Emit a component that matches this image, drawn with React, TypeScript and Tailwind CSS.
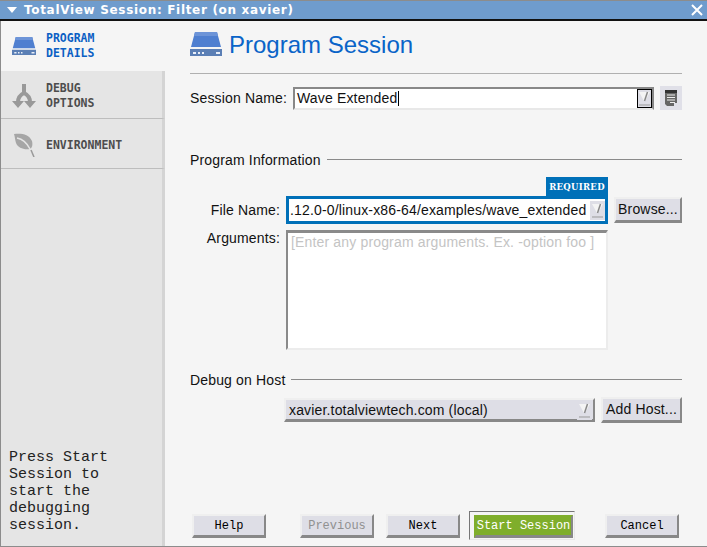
import { ReactNode } from "react";

const sans = "font-['Liberation_Sans',Arial,sans-serif]";
const mono = "font-['DejaVu_Sans_Mono','Liberation_Mono',monospace]";
const thinMono = "font-['Liberation_Mono',monospace]";

// Drive glyph used in the nav and next to the heading
const DriveIcon = ({ className }: { className: string }) => (
  <svg viewBox="0 0 32 24" className={className}>
    <path d="M5 0h22l4 15H1z" fill="#4f7fd0" />
    <path d="M5 0h22l1 4H4z" fill="#6d94d8" />
    <rect x="0" y="17" width="32" height="7" fill="#5b7fb5" />
    <rect x="3" y="20" width="3" height="2" fill="#e8eef8" />
    <rect x="8" y="20" width="2" height="2" fill="#e8eef8" />
    <rect x="12" y="20" width="2" height="2" fill="#e8eef8" />
    <rect x="26" y="20" width="4" height="2" fill="#e8eef8" />
  </svg>
);

const ForkIcon = () => (
  <svg viewBox="0 0 24 24" className="h-[24px] w-[24px]">
    <path d="M12 0v9M12 9C8 11 6 13 6 18M12 9c4 2 6 4 6 9" fill="none" stroke="#999" strokeWidth="4" />
    <path d="M0 17h12l-6 7zM12 17h12l-6 7z" fill="#999" />
  </svg>
);

const LeafIcon = () => (
  <svg viewBox="0 0 22 24" className="h-[24px] w-[22px]">
    <path d="M1 1c7-1 15 0 18 7 1 4 0 7-2 8-6 1-12-1-14-6C2 7 2 4 1 1z" fill="#a6a6a6" />
    <path d="M4 5c5 1 10 5 13 11l3 8" fill="none" stroke="#e5e5e5" strokeWidth="1.5" />
    <path d="M18 17l3 7" fill="none" stroke="#999" strokeWidth="1.5" />
  </svg>
);

const ComboArrow = ({ boxed }: { boxed?: boolean }) => (
  <span className={`flex h-[19px] w-[15px] shrink-0 items-center justify-center bg-[#dedee6] ${boxed ? "border border-black" : ""}`}>
    <svg viewBox="0 0 13 17" className="h-[17px] w-[13px]">
      <path d="M1 2h11l-5 9H6z" fill="#f4f4f4" />
      <path d="M9.5 2L6.5 11" stroke="#888" strokeWidth="1.5" />
      <path d="M1 15h11" stroke="#999" strokeWidth="1" />
    </svg>
  </span>
);

const NavItem = ({ icon, lines, active, h }: { icon: ReactNode; lines: string[]; active?: boolean; h: string }) => (
  <div
    className={`flex shrink-0 items-center ${h} ${
      active ? "bg-[#f5f5f5] text-[#0b5fc4]" : "border-b border-b-[#bdbdbd] border-r-[3px] border-r-[#d4d4d4] text-[#4d4d4d]"
    }`}
  >
    <span className="flex w-[45px] shrink-0 justify-center">{icon}</span>
    <div className={`${mono} text-[11.5px] font-bold leading-[15px]`}>
      {lines.map((l) => (
        <div key={l}>{l}</div>
      ))}
    </div>
  </div>
);

const SectionTitle = ({ children, className }: { children: string; className: string }) => (
  <div className={`flex items-center gap-[6px] ${className}`}>
    <span className="text-[14px] leading-[16px]">{children}</span>
    <span className="mb-[2px] h-[1px] flex-1 bg-[#8a8a8a]" />
  </div>
);

const BevelButton = ({ children, className }: { children: ReactNode; className: string }) => (
  <button className={`flex items-center justify-center border-t-2 border-l-2 border-t-[#efefef] border-l-[#efefef] border-r-2 border-b-[3px] border-r-[#888] border-b-[#888] bg-[#dedee6] ${className}`}>
    {children}
  </button>
);

const FooterButton = ({ label, muted, className }: { label: string; muted?: boolean; className: string }) => (
  <BevelButton className={`h-[24px] w-[74px] pt-[1px] ${thinMono} text-[12px] ${muted ? "text-[#909090]" : "text-black"} ${className}`}>
    {label}
  </BevelButton>
);

export default function App() {
  return (
    <div className={`flex h-[547px] w-[707px] flex-col overflow-hidden bg-[#f5f5f5] text-[#111] ${sans}`}>
      {/* title bar */}
      <div className="flex h-[21px] shrink-0 items-center border-t border-t-[#8c8c8c] border-b-2 border-b-[#111] bg-[#6f9ccd] pl-[7px] pr-[4px] text-white">
        <svg viewBox="0 0 10 6" className="h-[6px] w-[10px]">
          <path d="M0 0h10L5 6z" fill="#fff" />
        </svg>
        <span className="ml-[7px] text-[12px] font-bold leading-none tracking-[0.68px] font-['DejaVu_Sans',sans-serif]">
          TotalView Session: Filter (on xavier)
        </span>
        <svg viewBox="0 0 12 12" className="ml-auto h-[12px] w-[12px]">
          <path d="M1 1l10 10M11 1L1 11" stroke="#fff" strokeWidth="2" />
        </svg>
      </div>

      <div className="flex min-h-0 flex-1 border-l border-b border-l-[#8c8c8c] border-b-[#8c8c8c]">
        {/* sidebar */}
        <aside className="flex w-[164px] shrink-0 flex-col bg-[#e5e5e5]">
          <NavItem active h="h-[50px]" icon={<DriveIcon className="h-[18px] w-[24px]" />} lines={["PROGRAM", "DETAILS"]} />
          <NavItem h="h-[48px] pt-[2px]" icon={<ForkIcon />} lines={["DEBUG", "OPTIONS"]} />
          <NavItem h="h-[50px] pt-[3px]" icon={<LeafIcon />} lines={["ENVIRONMENT"]} />
          <div className={`flex flex-1 flex-col justify-end border-r-[3px] border-r-[#d4d4d4] pb-[12px] pl-[8px] ${thinMono} text-[15px] leading-[17px] text-[#222]`}>
            <div>
              Press Start
              <br />
              Session to
              <br />
              start the
              <br />
              debugging
              <br />
              session.
            </div>
          </div>
        </aside>

        {/* main */}
        <main className="flex min-w-0 flex-1 flex-col pl-[25px] pr-[25px] tracking-[0.16px]">
          <div className="mt-[9px] flex h-[28px] items-center gap-[7px]">
            <DriveIcon className="h-[24px] w-[32px]" />
            <h1 className="pt-[1px] text-[24px] font-normal leading-[28px] tracking-normal text-[#0a64c8]">Program Session</h1>
          </div>
          <div className="mt-[15px] h-[1px] bg-[#b0b0b0]" />

          <div className="mt-[12px] flex items-center">
            <span className="w-[103px] shrink-0 text-[14px]">Session Name:</span>
            <div className="flex h-[23px] w-[361px] items-center border-t-2 border-l-2 border-t-[#888] border-l-[#888] border-r-2 border-b-2 border-r-[#888] border-b-[#e8e8e8] bg-white">
              <span className="flex-1 pl-[2px] text-[14px] leading-[16px]">
                Wave Extended<span className="ml-[1px] inline-block h-[15px] w-[1px] bg-black align-middle" />
              </span>
              <ComboArrow boxed />
            </div>
            <div className="ml-[6px] flex h-[24px] w-[22px] items-center justify-center bg-[#e0e0e8]">
              <svg viewBox="0 0 12 16" className="h-[16px] w-[12px]">
                <path d="M0 0h12v13H9v3H2l-2-2z" fill="#666" />
                <rect x="0" y="0" width="12" height="3" fill="#333" />
                <path d="M2 5h8M2 7.5h8M2 10h8M5 12.5h5" stroke="#eee" strokeWidth="1" />
              </svg>
            </div>
          </div>

          <SectionTitle className="mt-[42px]">Program Information</SectionTitle>

          <div className="relative mt-[28px] flex justify-end">
            <span className="absolute right-[74px] top-[-19px] flex h-[19px] w-[62px] items-center justify-center bg-[#0070b8] pt-[1px] font-['DejaVu_Serif',serif] text-[8.5px] font-bold tracking-[0.3px] text-white">
              REQUIRED
            </span>
            <span className="mr-[6px] self-center text-[14px]">File Name:</span>
            <div className="flex h-[28px] w-[322px] items-center border-[3px] border-[#0070b8] bg-white">
              <span className="flex-1 overflow-hidden whitespace-nowrap pl-[1px] text-[14px]">
                .12.0-0/linux-x86-64/examples/wave_extended
              </span>
              <ComboArrow />
            </div>
            <BevelButton className="ml-[6px] mt-[1px] h-[26px] w-[68px] text-[14px]">Browse...</BevelButton>
          </div>

          <div className="mt-[6px] flex justify-end pr-[74px]">
            <span className="mr-[6px] text-[14px] leading-[16px]">Arguments:</span>
            <div className="h-[120px] w-[322px] border-t-[3px] border-l-2 border-t-[#8a8a8a] border-l-[#8a8a8a] border-r-2 border-b-2 border-r-[#ececec] border-b-[#ececec] bg-white pl-[3px] pt-[1px] text-[14px] leading-[16px] text-[#c4c4c4]">
              [Enter any program arguments. Ex. -option foo ]
            </div>
          </div>

          <SectionTitle className="mt-[22px]">Debug on Host</SectionTitle>

          <div className="mt-[9px] flex items-center justify-end">
            <BevelButton className="h-[24px] w-[311px] !justify-between pl-[3px] pr-[1px] pt-[1px] text-[14px]">
              <span>xavier.totalviewtech.com (local)</span>
              <ComboArrow />
            </BevelButton>
            <BevelButton className="ml-[6px] h-[26px] w-[81px] text-[14px]">Add Host...</BevelButton>
          </div>

          {/* footer */}
          <div className="mt-auto mb-[6px] flex items-center pl-[2px] tracking-normal">
            <FooterButton label="Help" className="" />
            <FooterButton label="Previous" muted className="ml-[34px]" />
            <FooterButton label="Next" className="ml-[12px]" />
            <div className="ml-[9px] w-[106px] border border-t-[#777] border-l-[#777] border-r-[#e8e8e8] border-b-[#e8e8e8] pb-[1px] pl-[4px] pr-[1px] pt-[3px]">
              <BevelButton className={`h-[23px] w-full !border-t-[#7fae2b] !border-l-[#7fae2b] !bg-[#7fae2b] ${thinMono} text-[12px] text-white`}>
                Start Session
              </BevelButton>
            </div>
            <FooterButton label="Cancel" className="ml-[30px]" />
          </div>
        </main>
      </div>
    </div>
  );
}
